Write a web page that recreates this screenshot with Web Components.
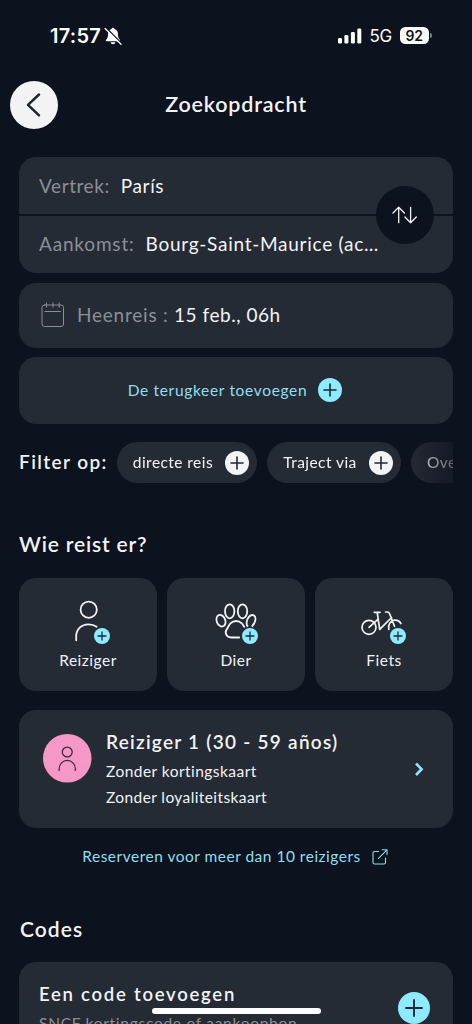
<!DOCTYPE html>
<html lang="nl">
<head>
<meta charset="utf-8">
<title>Zoekopdracht</title>
<style>
  html, body { margin: 0; height: 1024px; overflow: hidden; background: #0c121e; }
  body { font-family: Lato, "Open Sans", sans-serif; color: #f3f3f6; }
</style>
</head>
<body>
<search-screen></search-screen>
<script>
const define = (name, html, setup) => {
  const tpl = document.createElement('template');
  tpl.innerHTML = html;
  customElements.define(name, class extends HTMLElement {
    connectedCallback() {
      if (this.shadowRoot) return;
      this.attachShadow({ mode: 'open' }).append(tpl.content.cloneNode(true));
      if (setup) setup(this, this.shadowRoot);
    }
  });
};

/* One line of text: size, weight and tracking come from attributes. */
define('ui-text', `<style>
  :host { display: block; line-height: 24px; white-space: nowrap; flex: none; }
  :host([muted]) { color: #8c8f97; }
  :host([accent]) { color: #8fdff0; }
  :host([bold]) { font-weight: 600; }
</style><slot></slot>`, el => {
  el.style.fontSize = el.getAttribute('size') + 'px';
  el.style.letterSpacing = (el.getAttribute('track') || 0) + 'px';
});

/* Round plus button. */
define('plus-badge', `<style>
  :host { display: block; flex: none; width: var(--d, 24px); height: var(--d, 24px); color: #8eeafe; }
  :host([light]) { color: #f4f4f8; }
  svg { display: block; width: 100%; height: 100%; }
</style>
<svg viewBox="0 0 24 24"><circle cx="12" cy="12" r="12" fill="currentColor"/>
<path d="M12 6v12M6 12h12" fill="none" stroke="#1b2735" stroke-linecap="round" style="stroke-width:var(--s,1.6)"/></svg>`);

define('status-bar', `<style>
  :host { display: flex; align-items: center; height: 72px; padding: 0 40.500px 0 50px; box-sizing: border-box; font-family: Inter, sans-serif; color: #fff; }
  .bell { margin-left: 3px; flex: 1; }
  svg { display: block; }
  .net { margin: 0 8px 0 7.500px; }
  .battery { width: 28.500px; height: 17px; border-radius: 5.500px; background: #fff; color: #0c121e; display: flex; justify-content: center; align-items: center; margin-top: -1px; }
  .nub { width: 2px; height: 5px; border-radius: 0 2px 2px 0; background: #7b7f87; margin-left: 1px; margin-top: -1px; }
</style>
<ui-text bold size="20" track="0.26">17:57</ui-text>
<div class="bell"><svg width="18" height="18" viewBox="0 0 18 18">
  <path d="M9 .8c.9 0 1.4.6 1.5 1.3 2.2.7 3.4 2.4 3.4 4.7 0 3.4.7 4.6 2 6 .5.6.3 1.5-.6 1.5H2.7c-.9 0-1.200-.9-.6-1.500 1.300-1.400 2-2.600 2-6 0-2.300 1.200-4 3.400-4.700C7.600 1.400 8.100.8 9 .8zM6.600 15.200h4.800c-.2 1.200-1.100 2-2.400 2s-2.200-.8-2.400-2z" fill="#fff"/>
  <path d="M2.100 .8L18 16.700" stroke="#0c121e" stroke-width="1.300"/>
  <path d="M1.100 1.500L17 17.300" stroke="#fff" stroke-width="1.300" stroke-linecap="round"/>
</svg></div>
<svg width="24" height="16" viewBox="0 0 24 16" fill="#fff">
  <rect x="0" y="10" width="4" height="5.500" rx="1.300"/><rect x="6.400" y="7" width="4" height="8.500" rx="1.300"/>
  <rect x="12.900" y="4" width="4" height="11.500" rx="1.300"/><rect x="19.300" y=".5" width="4" height="15" rx="1.300"/>
</svg>
<ui-text class="net" size="17" track="-0.3">5G</ui-text>
<div class="battery"><ui-text bold size="14" track="-0.2">92</ui-text></div><div class="nub"></div>`);

define('page-header', `<style>
  :host { display: grid; grid-template-columns: 48px 1fr 48px; align-items: center; height: 65px; padding: 0 10px; }
  .back { width: 48px; height: 48px; border-radius: 50%; background: #f3f3f6; }
  svg { display: block; width: 100%; height: 100%; }
  ui-text { justify-self: center; padding-bottom: 2px; }
</style>
<div class="back"><svg viewBox="0 0 48 48"><path d="M29 13.500L18 23.800L29 34.300" fill="none" stroke="#20262f" stroke-width="2.500" stroke-linecap="round" stroke-linejoin="round"/></svg></div>
<ui-text bold size="21.5" track="0.8"><slot></slot></ui-text>`);

define('route-card', `<style>
  :host { display: grid; grid-template-rows: 57px 57px; row-gap: 2px; position: relative; }
  .row { background: #252b35; display: flex; align-items: center; padding-left: 20px; }
  .row:first-of-type { border-radius: 17px 17px 0 0; }
  .row:last-of-type { border-radius: 0 0 17px 17px; padding-bottom: 2px; height: 55px; }
  .swap { position: absolute; right: 19px; top: 29px; width: 58px; height: 58px; }
</style>
<div class="row"><slot name="from"></slot></div>
<div class="row"><slot name="to"></slot></div>
<svg class="swap" viewBox="0 0 58 58"><circle cx="29" cy="29" r="29" fill="#0c121e"/>
<path d="M22.700 36.700V21.500M17 27l5.700-5.700L28.400 27M34.600 21.300v15.200M28.900 31l5.700 5.700L40.300 31" fill="none" stroke="#f3f3f6" stroke-width="1.300" stroke-linecap="round" stroke-linejoin="round"/></svg>`);

define('field-pair', `<style>:host { display: flex; gap: var(--gap, 12px); }</style><slot></slot>`);

define('date-card', `<style>
  :host { display: flex; align-items: center; height: 64.500px; border-radius: 17px; background: #252b35; padding-left: 22px; }
  svg { display: block; margin-right: 12px; }
</style>
<svg width="24" height="26" viewBox="0 0 24 26" fill="none" stroke="#8b8e95" stroke-width="1" stroke-linecap="round">
<rect x="1" y="3" width="21.500" height="21.500" rx="2.500"/><path d="M5.500 .8v4.400M12 .8v4.400M18.200 .8v4.400M4 9.500h15.500"/></svg>
<slot></slot>`);

define('add-return', `<style>
  :host { display: flex; align-items: center; justify-content: center; gap: 11px; height: 66.500px; border-radius: 17px; background: #252b35; padding-right: 2px; }
  ui-text { padding-bottom: 1px; }
</style>
<ui-text accent size="15.5" track="0.67"><slot></slot></ui-text><plus-badge></plus-badge>`);

define('filter-chip', `<style>
  :host { display: flex; align-items: center; flex: none; height: 41px; border-radius: 21px; background: #252b35; padding: 0 8px 0 16px; gap: 12.300px; }
  ui-text { padding-bottom: 1px; }
</style>
<ui-text size="15.5" track="0.44"><slot></slot></ui-text><plus-badge light style="--d:24px"></plus-badge>`);

define('filter-bar', `<style>
  :host { display: flex; align-items: center; height: 41px; }
  .strip { flex: 1; min-width: 0; margin-left: 9px; display: flex; gap: 10px; overflow: hidden;
    -webkit-mask-image: linear-gradient(90deg, #000 calc(100% - 44px), rgba(0,0,0,.35)); mask-image: linear-gradient(90deg, #000 calc(100% - 44px), rgba(0,0,0,.35)); }
  .label { padding-bottom: 1px; }
</style>
<ui-text class="label" bold size="19" track="1.41">Filter op:</ui-text><div class="strip"><slot></slot></div>`);

define('type-tile', `<style>
  :host { display: flex; flex-direction: column; align-items: center; height: 93px; padding-top: 20px; border-radius: 17px; background: #252b35; }
  .art { position: relative; width: 60px; height: 50px; }
  plus-badge { position: absolute; left: 36px; top: 30.300px; --d: 16px; --s: 1.9; }
  ::slotted(svg) { display: block; width: 60px; height: 50px; }
</style>
<div class="art"><slot name="icon"></slot><plus-badge></plus-badge></div>
<ui-text size="15.5" track="0.5"><slot></slot></ui-text>`);

define('tile-row', `<style>:host { display: grid; grid-template-columns: repeat(3, 1fr); gap: 10px; }</style><slot></slot>`);

define('traveller-card', `<style>
  :host { display: flex; height: 118px; border-radius: 17px; background: #252b35; box-sizing: border-box; padding: 20px 28px 0 24px; }
  .face { width: 48.500px; height: 48.500px; margin: 4px 14.500px 0 0; }
  .lines { flex: 1; display: grid; grid-template-rows: 29px 26px 24px; align-content: start; }
  .go { align-self: flex-start; margin-top: 31px; }
  svg { display: block; }
</style>
<svg class="face" viewBox="0 0 48 48"><circle cx="24" cy="24" r="24" fill="#f598c8"/>
<g fill="none" stroke="#3a2238" stroke-width="1.200" stroke-linecap="round"><circle cx="24" cy="17.800" r="4.900"/><path d="M16 36v-1.800a8 8 0 0 1 16 0V36"/></g></svg>
<div class="lines"><slot></slot></div>
<svg class="go" width="12" height="16" viewBox="0 0 12 16"><path d="M3 2.500L8.600 8.200L3 14" fill="none" stroke="#8fe3fb" stroke-width="2.600"/></svg>`);

define('external-link', `<style>
  :host { display: flex; align-items: center; justify-content: center; gap: 11.500px; height: 24px; padding-right: 1.500px; }
  svg { display: block; margin-top: 2px; }
</style>
<ui-text accent size="15.5" track="0.5"><slot></slot></ui-text>
<svg width="16" height="16" viewBox="0 0 16 16" fill="none" stroke="#8fdff0" stroke-width="1.100" stroke-linecap="round" stroke-linejoin="round">
<path d="M6.500 2.500H2.500Q1 2.500 1 4v9.500Q1 15 2.500 15H12q1.500 0 1.500-1.500V9M6.500 9.300L15 .8M10.200 .8H15v4.800"/></svg>`);

define('code-card', `<style>
  :host { display: flex; justify-content: space-between; height: 110px; border-radius: 17px; background: #252b35; padding: 0 23px 0 20px; }
  .lines { display: grid; grid-template-rows: 29px 24px; align-content: start; padding-top: 20px; }
  plus-badge { --d: 32px; --s: 1.4; margin-top: 29.500px; }
</style>
<div class="lines"><slot></slot></div><plus-badge></plus-badge>`);

define('home-indicator', `<style>
  :host { position: absolute; left: 152px; top: 1008px; width: 168.500px; height: 6px; border-radius: 3px; background: #fff; }
</style>`);

define('search-screen', `<style>
  :host { display: block; position: relative; width: 472px; height: 1024px; overflow: hidden; background: #0c121e; }
  main { display: flex; flex-direction: column; padding: 20px 19px 0; }
  date-card { margin-top: 10px; }
  add-return { margin-top: 9.500px; }
  filter-bar { margin-top: 18.500px; }
  .who { margin-top: 49px; }
  tile-row { margin-top: 22px; }
  traveller-card { margin-top: 19px; }
  external-link { margin-top: 16px; }
  .codes { margin-top: 49px; padding-left: 1px; }
  code-card { margin-top: 21px; }
</style>
<status-bar></status-bar>
<page-header>Zoekopdracht</page-header>
<main>
  <route-card>
    <field-pair slot="from" style="--gap:11px"><ui-text muted size="19" track="0.58">Vertrek:</ui-text><ui-text size="19" track="0.62">París</ui-text></field-pair>
    <field-pair slot="to" style="--gap:11px"><ui-text muted size="19" track="0.82">Aankomst:</ui-text><ui-text size="19" track="0.73">Bourg-Saint-Maurice (ac…</ui-text></field-pair>
  </route-card>
  <date-card><field-pair style="--gap:5.500px"><ui-text muted size="19" track="0.77">Heenreis :</ui-text><ui-text size="19" track="0.53">15 feb., 06h</ui-text></field-pair></date-card>
  <add-return>De terugkeer toevoegen</add-return>
  <filter-bar><filter-chip>directe reis</filter-chip><filter-chip>Traject via</filter-chip><filter-chip>Overstap</filter-chip></filter-bar>
  <ui-text class="who" bold size="21" track="0.83">Wie reist er?</ui-text>
  <tile-row>
    <type-tile>
      <svg slot="icon" viewBox="0 0 60 50" fill="none" stroke="#f3f3f6" stroke-width="1.800" stroke-linecap="round"><circle cx="30.700" cy="11.700" r="8.100"/><path d="M18.200 42.300V38.300C18.200 31 23.500 26.300 30.500 26.300C33.600 26.300 36.400 27.100 38.600 28.700"/></svg>
      Reiziger</type-tile>
    <type-tile>
      <svg slot="icon" viewBox="0 0 60 50" fill="none" stroke="#f3f3f6" stroke-width="1.800" stroke-linecap="round"><ellipse cx="15" cy="22.700" rx="4.300" ry="6" transform="rotate(-22 15 22.700)"/><ellipse cx="23.700" cy="13.300" rx="4.700" ry="7"/><ellipse cx="36.500" cy="13.300" rx="4.700" ry="7"/><path d="M41.500 28C39.900 26.500 40.700 21.500 42.900 18.900C45.500 15.800 49.600 16.600 49.500 21C49.400 23.600 48 26.400 46.300 28"/><path d="M33.200 39.500H25.200C20.500 39.500 18.300 34.700 20.700 31.400C22.300 29.200 22.600 27.300 24.500 25.300C27.600 22.200 32.700 22.200 35.800 25.300C36.900 26.400 37.500 27.700 38.200 28.900"/></svg>
      Dier</type-tile>
    <type-tile>
      <svg slot="icon" viewBox="0 0 60 50" fill="none" stroke="#f3f3f6" stroke-width="1.700" stroke-linecap="round" stroke-linejoin="round"><circle cx="15" cy="29.300" r="7"/><path d="M15 29.300L23.600 21.600M20.300 14.300H26M23.200 14.300L25.700 31.300L37.600 19.500M31.600 14H33.500Q35 14 35.500 15.500L40.500 28.300M34.800 31.500C33.700 27 36.300 22.700 40.500 22.200C43.500 21.900 45.600 23.200 46.900 25.500"/></svg>
      Fiets</type-tile>
  </tile-row>
  <traveller-card>
    <ui-text bold size="19" track="1.25">Reiziger 1 (30 - 59 años)</ui-text>
    <ui-text size="15.5" track="0.46">Zonder kortingskaart</ui-text>
    <ui-text size="15.5" track="0.4">Zonder loyaliteitskaart</ui-text>
  </traveller-card>
  <external-link>Reserveren voor meer dan 10 reizigers</external-link>
  <ui-text class="codes" bold size="21" track="1.07">Codes</ui-text>
  <code-card>
    <ui-text bold size="18.5" track="1.75">Een code toevoegen</ui-text>
    <ui-text muted size="15.5" track="0.72">SNCF kortingscode of aankoopbon</ui-text>
  </code-card>
</main>
<home-indicator></home-indicator>`);
</script>
</body>
</html>
